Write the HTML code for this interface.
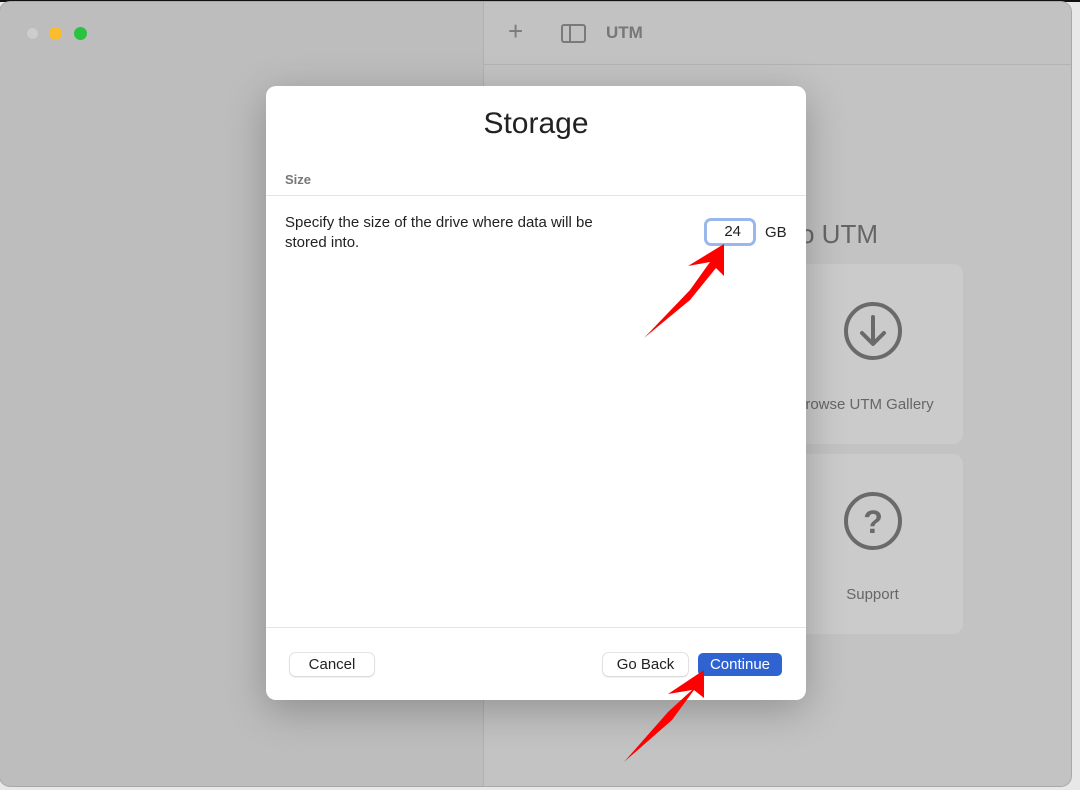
<!DOCTYPE html>
<html><head><style>
body{margin:0;width:1080px;height:790px;background:#e8e8e8;font-family:"Liberation Sans",sans-serif;overflow:hidden;position:relative}
.top{position:absolute;left:0;top:0;width:1080px;height:2px;background:#111}
.win{position:absolute;left:0;top:2px;width:1071px;height:784px;background:#bdbdbd;border-radius:10px;overflow:hidden;box-shadow:0 0 0 1px #a8a8a8}
.right{position:absolute;left:483px;top:0;right:0;bottom:0;background:#c3c3c3;border-left:1px solid #b0b0b0}
.tb{position:absolute;left:0;right:0;top:0;height:62px;border-bottom:1px solid #b3b3b3;background:#c2c2c2}
.dot{position:absolute;top:25px;width:13px;height:13px;border-radius:50%}
.card{position:absolute;left:300px;width:179px;height:180px;background:#cbcbcb;border-radius:10px;color:#666;font-size:15px;text-align:center}
.dlg{position:absolute;left:266px;top:86px;width:540px;height:614px;background:#fff;border-radius:10px;box-shadow:0 10px 40px rgba(0,0,0,.25)}
.btn{position:absolute;top:567px;height:23px;border-radius:5px;font-size:15px;line-height:23px;text-align:center;box-shadow:0 0 0 .5px #ccc,0 1px 2px rgba(0,0,0,.15);background:#fff;color:#222}
</style></head><body>
<div class="top"></div>
<div class="win">
<div class="dot" style="left:26px;background:#cdcdcd;border:1px solid #bbb;width:11px;height:11px"></div>
<div class="dot" style="left:49px;background:#fcbc2f"></div>
<div class="dot" style="left:74px;background:#29c33f"></div>
<div class="right">
<div class="tb">
<div style="position:absolute;left:24px;top:14px;font-size:26px;color:#7a7a7a;font-weight:300">+</div>
<div style="position:absolute;left:77px;top:22px;width:21px;height:15px;border:2px solid #7a7a7a;border-radius:3px"><div style="position:absolute;left:6px;top:0;bottom:0;border-left:2px solid #7a7a7a"></div></div>
<div style="position:absolute;left:122px;top:21px;font-size:17px;font-weight:bold;color:#777">UTM</div>
</div>
<div style="position:absolute;left:316px;top:217px;font-size:26px;color:#666">o UTM</div>
<div class="card" style="top:262px">
<svg style="position:absolute;left:58px;top:36px" width="62" height="62" viewBox="0 0 62 62"><circle cx="31" cy="31" r="27" fill="none" stroke="#6a6a6a" stroke-width="4"/><path d="M31 17v26M20 33l11 11 11-11" fill="none" stroke="#6a6a6a" stroke-width="4" stroke-linecap="round" stroke-linejoin="round"/></svg>
<div style="position:absolute;left:-18px;right:0;top:132px">Browse UTM Gallery</div></div>
<div class="card" style="top:452px">
<svg style="position:absolute;left:58px;top:36px" width="62" height="62" viewBox="0 0 62 62"><circle cx="31" cy="31" r="27" fill="none" stroke="#6a6a6a" stroke-width="4"/><text x="31" y="43" text-anchor="middle" font-family="Liberation Sans" font-weight="bold" font-size="32" fill="#6a6a6a">?</text></svg>
<div style="position:absolute;left:-2px;right:0;top:132px">Support</div></div>
</div>
</div>
<div class="dlg">
<div style="position:absolute;left:0;right:0;top:21px;text-align:center;font-size:30px;color:#222">Storage</div>
<div style="position:absolute;left:19px;top:86px;font-size:13px;color:#777;font-weight:bold">Size</div>
<div style="position:absolute;left:0;right:0;top:109px;border-top:1px solid #e3e3e3"></div>
<div style="position:absolute;left:19px;top:127px;font-size:15px;color:#222;line-height:20px;width:345px">Specify the size of the drive where data will be stored into.</div>
<div style="position:absolute;left:438px;top:132px;width:52px;height:28px;border:3px solid #9ab8ec;border-radius:7px;box-sizing:border-box;text-align:right;padding-right:12px;font-size:15px;line-height:22px;color:#222">24</div>
<div style="position:absolute;left:499px;top:138px;font-size:15px;color:#222">GB</div>
<div style="position:absolute;left:0;right:0;top:541px;border-top:1px solid #e3e3e3"></div>
<div class="btn" style="left:24px;width:84px">Cancel</div>
<div class="btn" style="left:337px;width:85px">Go Back</div>
<div class="btn" style="left:432px;width:84px;background:#2e63d1;color:#fff;box-shadow:none">Continue</div>
</div>
<svg style="position:absolute;left:0;top:0" width="1080" height="790"><path d="M644 338 L690 290 L710 262 L688 266 L724 244 L724 276 L716 268 L690 300 Z" fill="#f00"/><path d="M624 762 L668 712 L692 690 L668 694 L704 670 L704 698 L694 690 L672 720 Z" fill="#f00"/></svg>
</body></html>
